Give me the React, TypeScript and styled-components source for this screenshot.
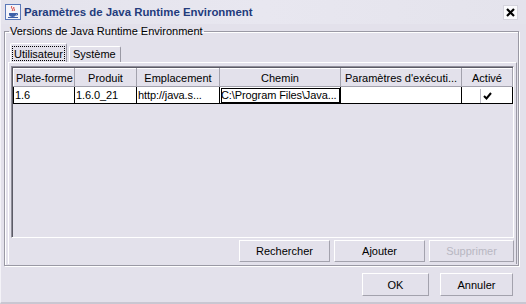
import React from "react";
import styled, { createGlobalStyle } from "styled-components";

const GlobalStyle = createGlobalStyle`
  html, body {
    margin: 0;
    padding: 0;
    background: #e3e1eb;
  }
  * {
    box-sizing: border-box;
  }
`;

const Window = styled.div`
  width: 526px;
  height: 304px;
  background: #e3e1eb;
  font-family: "Liberation Sans", Arial, sans-serif;
  font-size: 11px;
  color: #000;
  display: flex;
  flex-direction: column;
  border-left: 1px solid #f4f3f8;
  border-bottom: 2px solid #c9c7d2;
  overflow: hidden;
`;

const TitleBar = styled.div`
  height: 24px;
  display: flex;
  align-items: center;
  padding: 0 8px 0 4px;
  background: linear-gradient(90deg, #e4e3ec 0%, #e8e7f0 50%, #e4e3ec 100%);
`;

const TitleText = styled.span`
  margin-left: 3px;
  font-weight: bold;
  font-size: 11.4px;
  color: #233b7c;
  flex: 1;
`;

const CloseButton = styled.div`
  width: 15px;
  height: 15px;
  background: #fafafc;
  border: 1px solid #d5d4dd;
  display: flex;
  align-items: center;
  justify-content: center;
`;

const Content = styled.div`
  flex: 1;
  display: flex;
  flex-direction: column;
  padding: 1px 9px 0 3px;
`;

const Group = styled.fieldset`
  margin: 0;
  padding: 5px 1px 3px 3px;
  border: 1px solid #9a99a4;
  box-shadow: inset 1px 1px 0 #ffffff, 1px 1px 0 #ffffff;
  height: 241px;
  display: flex;
  flex-direction: column;
`;

const Legend = styled.legend`
  padding: 0 1px;
  margin-left: 1px;
  line-height: 13px;
`;

const TabStrip = styled.div`
  display: flex;
  align-items: flex-end;
  height: 19px;
  padding-left: 2px;
`;

const Tab = styled.div<{ $active?: boolean }>`
  height: ${(p) => (p.$active ? 19 : 16)}px;
  padding: ${(p) => (p.$active ? "2px 1px 0 1px" : "1px 4px 0 3px")};
  margin-left: ${(p) => (p.$active ? 0 : 2)}px;
  background: #e3e1eb;
  border: 1px solid #ffffff;
  border-right-color: #9a99a4;
  border-bottom: none;
  border-radius: 2px 2px 0 0;
`;

const FocusLabel = styled.span`
  display: block;
  border: 1px dotted #000;
  padding: 1px 1px 0 1px;
  height: 15px;
  line-height: 12px;
`;

const TabPanel = styled.div`
  flex: 1;
  border-top: 1px solid #ffffff;
  border-left: 1px solid #ffffff;
  border-right: 1px solid #9a99a4;
  padding: 3px 2px 2px 2px;
  display: flex;
  flex-direction: column;
`;

const ScrollPane = styled.div`
  height: 172px;
  border: 1px solid #8e8d98;
  border-right-color: #ffffff;
  border-bottom-color: #ffffff;
  box-shadow: inset 1px 1px 0 #5c5b66;
  padding: 1px 0 0 1px;
`;

const Table = styled.table`
  border-collapse: collapse;
  table-layout: fixed;
  width: 499px;
`;

const HeadCell = styled.th<{ $w: number }>`
  width: ${(p) => p.$w}px;
  height: 18px;
  padding: 0 2px;
  font-weight: normal;
  text-align: center;
  white-space: nowrap;
  overflow: hidden;
  background: #e3e1eb;
  border-left: 1px solid #ffffff;
  border-top: 1px solid #ffffff;
  border-right: 1px solid #a3a2ad;
  border-bottom: 1px solid #a3a2ad;
`;

const Cell = styled.td<{ $focus?: boolean; $center?: boolean }>`
  height: 17px;
  padding: 0 1px;
  background: #ffffff;
  border: 1px solid #000;
  outline: ${(p) => (p.$focus ? "1px solid #000" : "none")};
  outline-offset: -2px;
  white-space: nowrap;
  overflow: hidden;
  text-align: ${(p) => (p.$center ? "center" : "left")};
  line-height: 14px;
  letter-spacing: -0.1px;
`;

const CheckBox = styled.span`
  display: inline-flex;
  align-items: center;
  justify-content: center;
  width: 14px;
  height: 14px;
  border-left: 1px solid #b9b8c2;
  vertical-align: middle;
`;

const ButtonRow = styled.div`
  display: flex;
  justify-content: flex-end;
  gap: 4px;
  padding-top: 2px;
`;

const Button = styled.div<{ $w: number; $h?: number; $disabled?: boolean }>`
  width: ${(p) => p.$w}px;
  height: ${(p) => p.$h ?? 22}px;
  display: flex;
  align-items: center;
  justify-content: center;
  background: #e3e1eb;
  border: 1px solid #ffffff;
  border-right-color: #a3a2ad;
  border-bottom-color: #a3a2ad;
  color: ${(p) => (p.$disabled ? "#b8b7c2" : "#000")};
`;

const Footer = styled.div`
  display: flex;
  justify-content: flex-end;
  gap: 11px;
  padding: 7px 4px 0 0;
`;

const JavaIcon = () => (
  <svg width="16" height="16" viewBox="0 0 16 16">
    <rect x="0.5" y="0.5" width="15" height="15" fill="#f4f4fa" stroke="#5a78b8" />
    <path d="M7 2c-2 2 2 3 0 5M9 3c-1.5 1.5 1.5 2 0 4" stroke="#d8322a" strokeWidth="1" fill="none" />
    <path d="M4 9h7v1.5c0 1.5-1.5 2.5-3.5 2.5S4 12 4 10.5z" fill="#3d5fa8" />
    <path d="M11 9.5h1.5v1.5H11" stroke="#3d5fa8" fill="none" />
    <path d="M3 13.5h10" stroke="#3d5fa8" />
  </svg>
);

const columns = [
  { title: "Plate-forme", w: 61 },
  { title: "Produit", w: 62 },
  { title: "Emplacement", w: 83 },
  { title: "Chemin", w: 121 },
  { title: "Paramètres d'exécuti...", w: 121 },
  { title: "Activé", w: 51 },
];

export default function App() {
  return (
    <>
      <GlobalStyle />
      <Window>
        <TitleBar>
          <JavaIcon />
          <TitleText>Paramètres de Java Runtime Environment</TitleText>
          <CloseButton>
            <svg width="9" height="9" viewBox="0 0 9 9">
              <path d="M1 1l7 7M8 1L1 8" stroke="#000" strokeWidth="2.2" />
            </svg>
          </CloseButton>
        </TitleBar>
        <Content>
          <Group>
            <Legend>Versions de Java Runtime Environment</Legend>
            <TabStrip>
              <Tab $active>
                <FocusLabel>Utilisateur</FocusLabel>
              </Tab>
              <Tab>Système</Tab>
            </TabStrip>
            <TabPanel>
              <ScrollPane>
                <Table>
                  <thead>
                    <tr>
                      {columns.map((c) => (
                        <HeadCell key={c.title} $w={c.w}>
                          {c.title}
                        </HeadCell>
                      ))}
                    </tr>
                  </thead>
                  <tbody>
                    <tr>
                      <Cell>1.6</Cell>
                      <Cell>1.6.0_21</Cell>
                      <Cell>http://java.s...</Cell>
                      <Cell $focus>C:\Program Files\Java...</Cell>
                      <Cell></Cell>
                      <Cell $center>
                        <CheckBox>
                          <svg width="9" height="8" viewBox="0 0 9 8">
                            <path d="M1 4l2.5 2.5L8 1" stroke="#000" strokeWidth="2" fill="none" />
                          </svg>
                        </CheckBox>
                      </Cell>
                    </tr>
                  </tbody>
                </Table>
              </ScrollPane>
              <ButtonRow>
                <Button $w={91}>Rechercher</Button>
                <Button $w={91}>Ajouter</Button>
                <Button $w={85} $disabled>
                  Supprimer
                </Button>
              </ButtonRow>
            </TabPanel>
          </Group>
          <Footer>
            <Button $w={67} $h={23}>
              OK
            </Button>
            <Button $w={73} $h={23}>
              Annuler
            </Button>
          </Footer>
        </Content>
      </Window>
    </>
  );
}
